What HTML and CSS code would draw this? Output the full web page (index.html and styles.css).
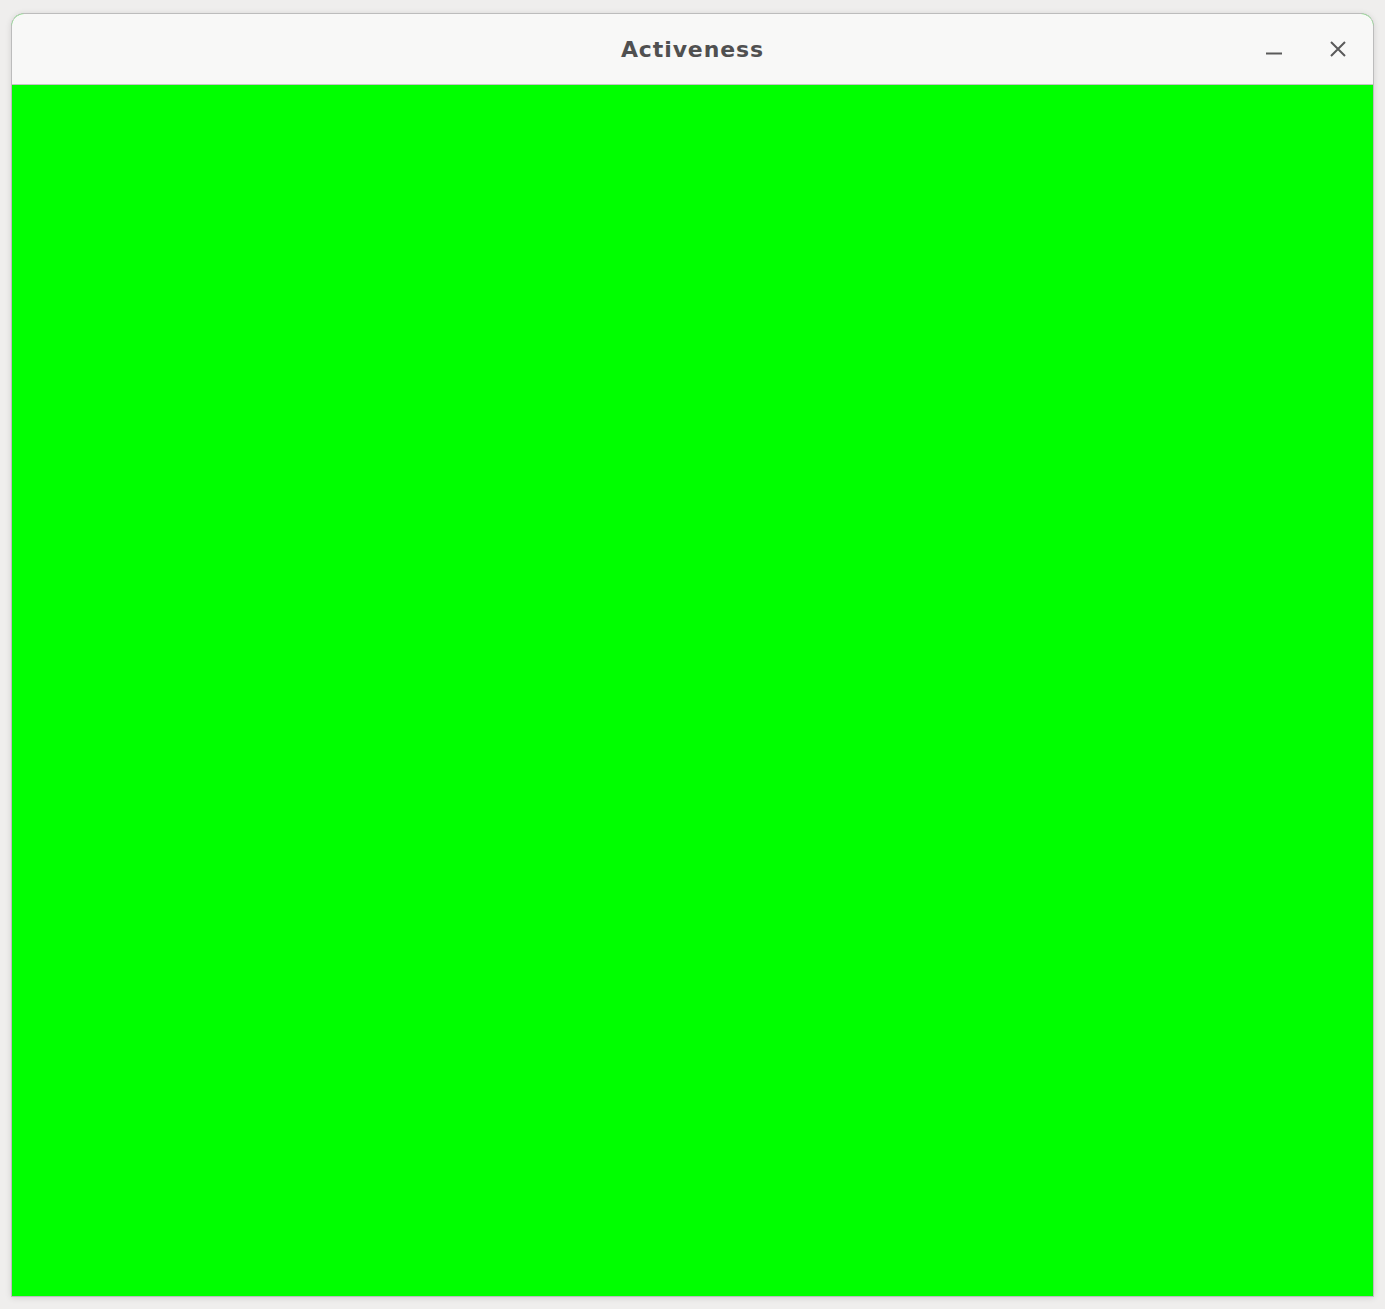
FILE: index.html
```html
<!DOCTYPE html>
<html>
<head>
<meta charset="utf-8">
<link rel="stylesheet" href="styles.css">
</head>
<body>
<div class="window">
  <div class="titlebar">
    <div class="title">Activeness</div>
    <div class="controls">
      <button class="btn min" aria-label="Minimize">
        <svg width="18" height="18" viewBox="0 0 18 18"><path d="M1 13.5H17" stroke="#5a5a5a" stroke-width="2" fill="none"/></svg>
      </button>
      <button class="btn close" aria-label="Close">
        <svg width="18" height="18" viewBox="0 0 18 18"><path d="M2 2L16 16M16 2L2 16" stroke="#5a5a5a" stroke-width="2" fill="none"/></svg>
      </button>
    </div>
  </div>
  <div class="content"></div>
</div>
</body>
</html>
```
FILE: styles.css
```css
html, body {
  margin: 0;
  padding: 0;
  background: #efeeed;
  height: 100%;
}
body {
  padding: 13px 12px 0 11px;
  box-sizing: border-box;
}
.window {
  width: 1363px;
  height: 1284px;
  display: flex;
  flex-direction: column;
  border: 1px solid #bcbcbc;
  border-radius: 13px 13px 0 0;
  overflow: hidden;
  box-shadow: 0 1px 6px rgba(0,0,0,0.12);
  box-sizing: border-box;
  background: #00ff00;
}
.titlebar {
  position: relative;
  height: 70px;
  flex: none;
  background: #f8f8f7;
  border-bottom: 1px solid #c4c4c4;
  display: flex;
  align-items: center;
  justify-content: center;
}
.title {
  font-family: "DejaVu Sans", "Open Sans", sans-serif;
  font-weight: 700;
  font-size: 22px;
  letter-spacing: 0.9px;
  color: #505050;
  margin-top: 1px;
}
.controls {
  position: absolute;
  right: 26px;
  top: 26px;
  display: flex;
  gap: 46px;
}
.btn {
  border: 0;
  background: transparent;
  padding: 0;
  width: 18px;
  height: 18px;
  display: block;
}
.btn svg { display: block; }
.content {
  flex: 1;
  background: #00ff00;
}
```
